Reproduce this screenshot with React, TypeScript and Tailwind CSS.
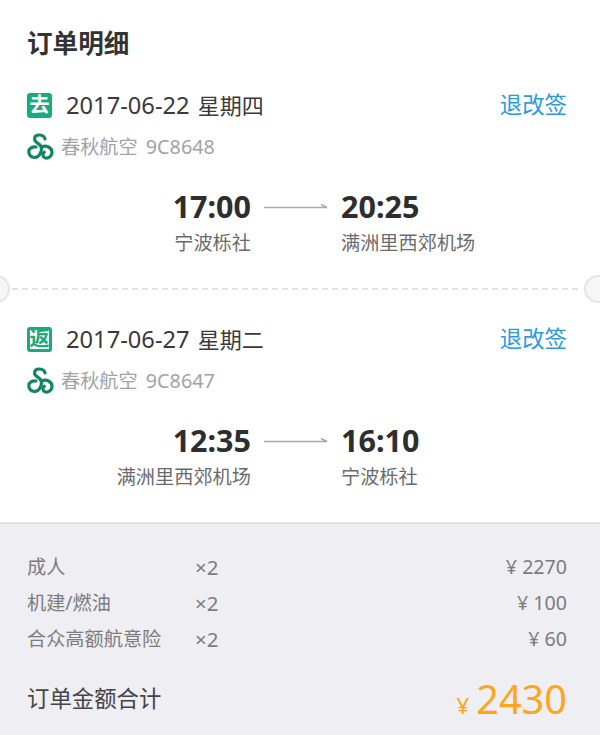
const font = { fontFamily: '"Noto Sans", "Noto Sans CJK SC", sans-serif' };

function Logo() {
  return (
    <svg width="27" height="27" viewBox="0 0 27 27" fill="none" stroke="#12875f" strokeLinecap="round" strokeWidth="3.2" className="shrink-0">
      <path d="M18 6C17 1 8 0.5 7.5 5.5C7 9.5 12.5 10 14 13.5C15.5 17 13 24.5 7.5 24.5C3.8 24.5 1.6 21.5 1.8 18.5C2 15.5 5 13.5 9 14" />
      <path d="M15 13.8C19 11.8 25 14.5 25 19.3C25 23.3 21 25.8 18 24.8C15.6 23.9 15.2 20.8 17.2 19.3" />
    </svg>
  );
}

function Leg({ badge, date, week, airline, flight, t1, p1, t2, p2, filled }: { badge: string; date: string; week: string; airline: string; flight: string; t1: string; p1: string; t2: string; p2: string; filled: boolean }) {
  return (
    <div className="pl-[27px] pr-[33px]">
      <div className="flex items-center justify-between h-[26px]">
        <div className="flex items-center">
          <span className={"flex items-center justify-center w-[25px] h-[25px] rounded-[3px] text-[20px] leading-none font-bold border-[3px] border-[#18ab7d] " + (filled ? "bg-[#18ab7d] text-white" : "bg-white text-[#18ab7d]")}>{badge}</span>
          <span className="ml-[14px] text-[23.7px] leading-[26px] text-[#3a3a3a]">{date}</span>
          <span className="ml-[8px] text-[22px] leading-[26px] text-[#3a3a3a]">{week}</span>
        </div>
        <span className="text-[22.4px] leading-[26px] text-[#2b9ae0]">退改签</span>
      </div>
      <div className="flex items-center mt-[15px] h-[27px]">
        <Logo />
        <span className="ml-[7px] text-[19.2px] leading-[27px] text-[#a3a3a3]">{airline}</span>
        <span className="ml-[8px] text-[19.8px] leading-[27px] text-[#a3a3a3]">{flight}</span>
      </div>
      <div className="grid grid-cols-[1fr_90px_1fr] mt-[28px] mr-[2px]">
        <div className="text-right">
          <div className="text-[30.5px] leading-[36px] font-bold text-[#2e2e2e]">{t1}</div>
          <div className="mt-[6px] text-[19.2px] leading-[26px] text-[#6b6b6b]">{p1}</div>
        </div>
        <div className="h-[36px] pt-[2px] flex items-center justify-center">
          <svg width="64" height="8" viewBox="0 0 64 8" fill="none" stroke="#a8a8a8" strokeWidth="1.4">
            <path d="M0 4.5H63L57 1.5" />
          </svg>
        </div>
        <div>
          <div className="text-[30.5px] leading-[36px] font-bold text-[#2e2e2e]">{t2}</div>
          <div className="mt-[6px] text-[19.2px] leading-[26px] text-[#6b6b6b]">{p2}</div>
        </div>
      </div>
    </div>
  );
}

function PriceRow({ name, price }: { name: string; price: string }) {
  return (
    <div className="flex items-center h-[36px] text-[19.2px] text-[#7c7c80]">
      <span className="w-[168px]">{name}</span>
      <span className="text-[20.5px]">×2</span>
      <span className="ml-auto text-[19.6px]">{price}</span>
    </div>
  );
}

export default function App() {
  return (
    <div className="w-[600px] h-[735px] bg-white flex flex-col overflow-hidden" style={font}>
      <div className="pl-[27px] pt-[24px] text-[25.6px] leading-[40px] font-bold text-[#333333]">订单明细</div>
      <div className="mt-[28px]">
        <Leg badge="去" filled date="2017-06-22" week="星期四" airline="春秋航空" flight="9C8648" t1="17:00" p1="宁波栎社" t2="20:25" p2="满洲里西郊机场" />
      </div>
      <div className="relative h-[2px] mt-[32px] mb-[36px] ml-[12px] mr-[22px] border-t-2 border-dashed border-[#e2e2e2]">
        <div className="absolute left-[-30px] top-[-15px] w-[28px] h-[28px] rounded-full bg-[#f6f6f6] border-2 border-[#e6e6e6]" />
        <div className="absolute right-[-34px] top-[-15px] w-[28px] h-[28px] rounded-full bg-[#f6f6f6] border-2 border-[#e6e6e6]" />
      </div>
      <Leg badge="返" filled={false} date="2017-06-27" week="星期二" airline="春秋航空" flight="9C8647" t1="12:35" p1="满洲里西郊机场" t2="16:10" p2="宁波栎社" />
      <div className="flex-1 mt-[32px] bg-[#eeeef3] border-t-2 border-[#e2e2e4] pl-[27px] pr-[33px] pt-[25px]">
        <PriceRow name="成人" price="¥ 2270" />
        <PriceRow name="机建/燃油" price="¥ 100" />
        <PriceRow name="合众高额航意险" price="¥ 60" />
        <div className="flex items-center justify-between mt-[17px] h-[50px]">
          <span className="text-[22.4px] text-[#454545]">订单金额合计</span>
          <span className="flex items-baseline text-[#fca61c]">
            <span className="text-[22px] mr-[7px]">¥</span>
            <span className="text-[39.7px] leading-[50px]">2430</span>
          </span>
        </div>
      </div>
    </div>
  );
}
